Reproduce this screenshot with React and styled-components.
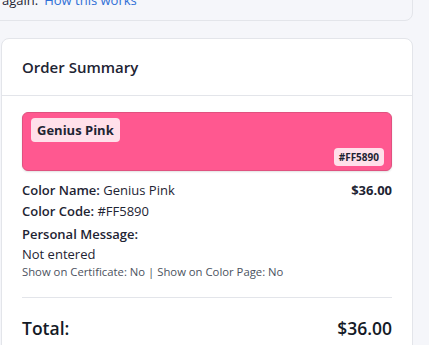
import styled, { createGlobalStyle } from 'styled-components';

const GlobalStyle = createGlobalStyle`
  html, body {
    margin: 0;
    padding: 0;
    background: #f5f6fa;
    font-family: "Open Sans", "Noto Sans", sans-serif;
    color: #1e2433;
    overflow: hidden;
  }
`;

const Page = styled.div`
  width: 412px;
  padding-left: 1px;
  display: flex;
  flex-direction: column;
  gap: 17px;
`;

const InfoCard = styled.div`
  margin: -17px 0 0 -30px;
  padding: 6px 20px 10px 30px;
  background: #f5f6fa;
  border: 1px solid #e3e5ea;
  border-radius: 8px;
  font-size: 13px;
  line-height: 20px;
  color: #1e2433;

  & a {
    color: #2f6fd6;
    text-decoration: none;
    margin-left: 6px;
  }
`;

const Card = styled.div`
  background: #ffffff;
  border: 1px solid #e3e5ea;
  border-radius: 8px;
  height: 340px;
`;

const CardHeader = styled.div`
  padding: 16px 20px;
  border-bottom: 1px solid #e3e5ea;
  font-size: 15px;
  line-height: 24px;
  font-weight: 600;
  color: #1e2433;
`;

const CardBody = styled.div`
  padding: 16px 20px;
`;

const Swatch = styled.div`
  height: 59px;
  box-sizing: border-box;
  padding: 5px 7px 4px 8px;
  background: ${p => p.$color};
  border: 1px solid #e0517f;
  border-radius: 6px;
  display: flex;
  flex-direction: column;
  justify-content: space-between;
  align-items: flex-start;
  box-shadow: 0 1px 2px rgba(0, 0, 0, 0.12);
`;

const SwatchName = styled.span`
  background: #ffe0ea;
  border-radius: 4px;
  padding: 2px 6px;
  font-size: 13px;
  line-height: 20px;
  font-weight: 700;
  color: #1e2433;
`;

const SwatchCode = styled.span`
  align-self: flex-end;
  background: #ffe0ea;
  border-radius: 4px;
  padding: 1px 5px;
  font-size: 10px;
  line-height: 16px;
  font-weight: 700;
  color: #1e2433;
`;

const Details = styled.div`
  margin-top: 9px;
  display: flex;
  justify-content: space-between;
  align-items: flex-start;
  font-size: 13px;
  line-height: 20.5px;
`;

const Line = styled.div`
  & b {
    font-weight: 600;
  }
`;

const Price = styled.div`
  font-weight: 700;
`;

const Message = styled.div`
  margin-top: 3px;
  font-size: 13px;
  line-height: 20px;

  & b {
    font-weight: 600;
  }
`;

const Note = styled.div`
  font-size: 11.3px;
  line-height: 16px;
  color: #4b5260;
`;

const Divider = styled.hr`
  border: none;
  border-top: 1px solid #e3e5ea;
  margin: 17px 0 0;
`;

const TotalRow = styled.div`
  display: flex;
  justify-content: space-between;
  margin-top: 17px;
  font-size: 17.5px;
  line-height: 26px;
  font-weight: 600;
  color: #141a26;
`;

export default function App() {
  return (
    <>
      <GlobalStyle />
      <Page>
        <InfoCard>
          again:<a href="#">How this works</a>
        </InfoCard>
        <Card>
          <CardHeader>Order Summary</CardHeader>
          <CardBody>
            <Swatch $color="#ff5890">
              <SwatchName>Genius Pink</SwatchName>
              <SwatchCode>#FF5890</SwatchCode>
            </Swatch>
            <Details>
              <div>
                <Line>
                  <b>Color Name:</b> Genius Pink
                </Line>
                <Line>
                  <b>Color Code:</b> #FF5890
                </Line>
              </div>
              <Price>$36.00</Price>
            </Details>
            <Message>
              <Line>
                <b>Personal Message:</b>
              </Line>
              <div>Not entered</div>
              <Note>Show on Certificate: No | Show on Color Page: No</Note>
            </Message>
            <Divider />
            <TotalRow>
              <span>Total:</span>
              <span>$36.00</span>
            </TotalRow>
          </CardBody>
        </Card>
      </Page>
    </>
  );
}
